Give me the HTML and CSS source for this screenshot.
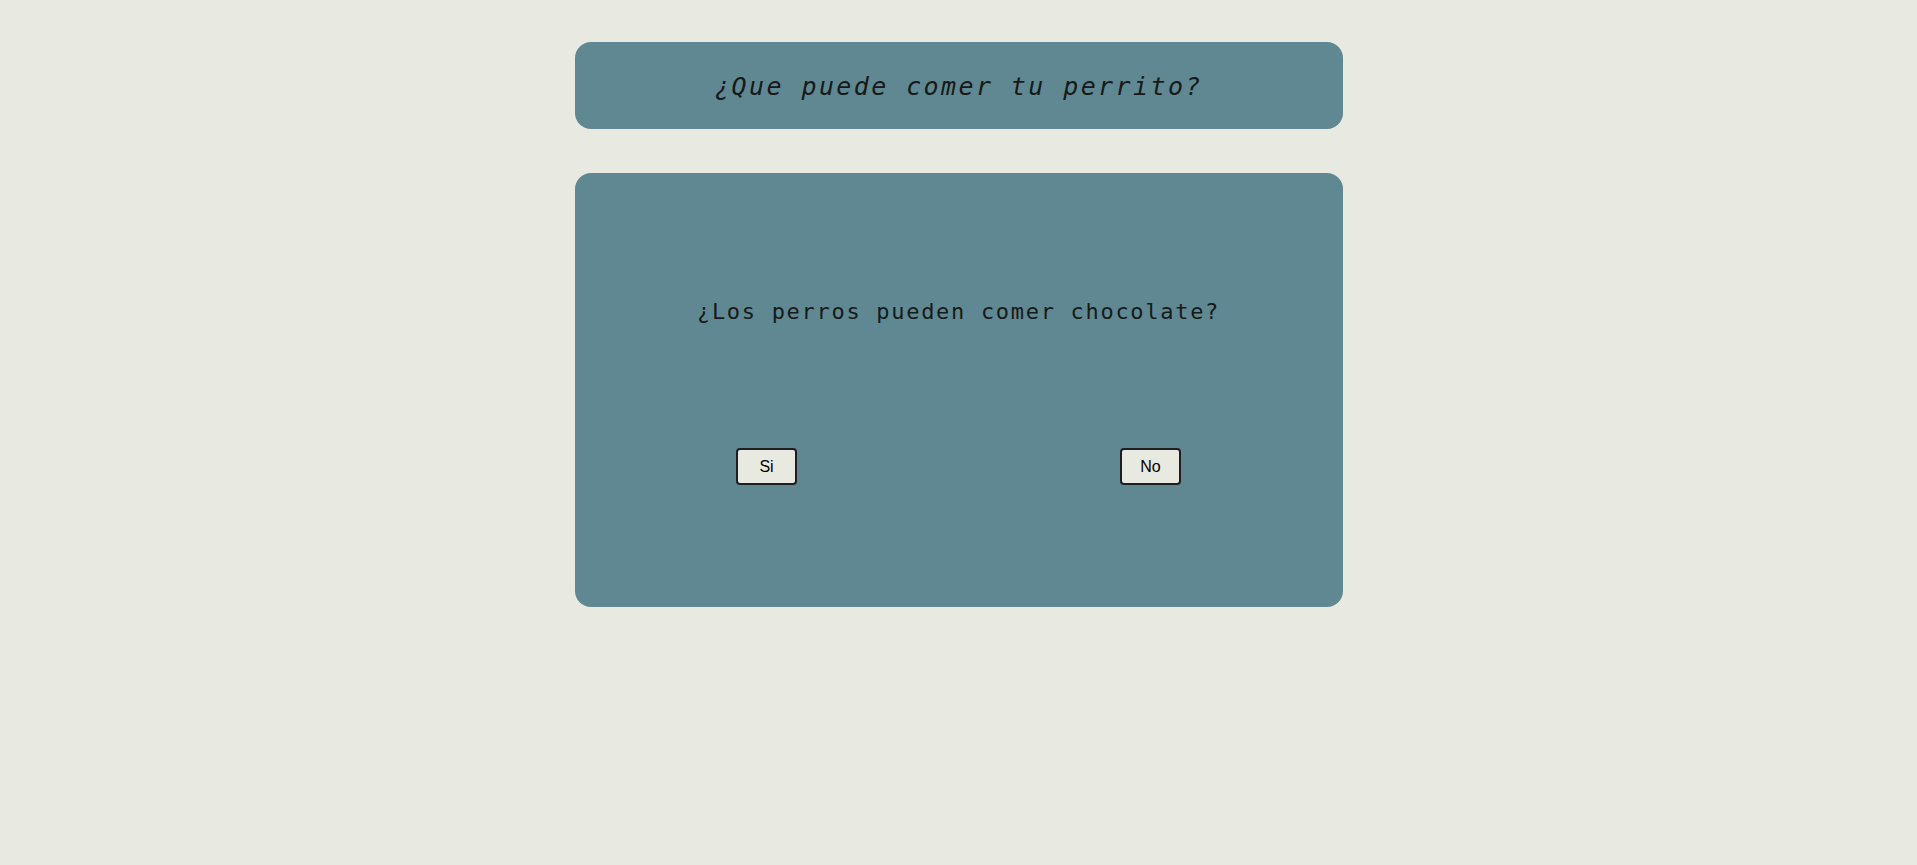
FILE: index.html
```html
<!DOCTYPE html>
<html lang="es">
<head>
<meta charset="utf-8">
<title>¿Que puede comer tu perrito?</title>
<link rel="stylesheet" href="styles.css">
</head>
<body>
<main class="page">
  <header class="title-box">
    <h1 class="title">¿Que puede comer tu perrito?</h1>
  </header>
  <section class="quiz-card">
    <p class="question">¿Los perros pueden comer chocolate?</p>
    <div class="answers">
      <button class="answer" type="button">Si</button>
      <button class="answer" type="button">No</button>
    </div>
  </section>
</main>
</body>
</html>
```
FILE: styles.css
```css
html, body {
  margin: 0;
  padding: 0;
  background: #e8e9e0;
}
body {
  font-family: "DejaVu Sans Mono", "Liberation Mono", monospace;
  color: #161a18;
}
.page {
  width: 768px;
  margin: 0 auto;
  padding-top: 42px;
  display: flex;
  flex-direction: column;
  gap: 44px;
}
.title-box {
  background: #608892;
  border-radius: 16px;
  height: 87px;
  display: flex;
  align-items: center;
  justify-content: center;
}
.title {
  margin: 0;
  font-size: 25px;
  font-style: oblique;
  font-weight: normal;
  letter-spacing: 2.4px;
  line-height: 30px;
  padding-top: 3px;
}
.quiz-card {
  background: #608892;
  border-radius: 16px;
  height: 434px;
  box-sizing: border-box;
  padding-top: 126px;
  display: flex;
  flex-direction: column;
}
.question {
  margin: 0;
  text-align: center;
  font-size: 22px;
  letter-spacing: 1.7px;
  line-height: 26px;
}
.answers {
  margin-top: 123px;
  display: flex;
  justify-content: space-around;
}
.answer {
  width: 61px;
  height: 37px;
  box-sizing: border-box;
  background: #e8e9e0;
  border: 2px solid #1e1e1e;
  border-radius: 4px;
  font-family: "Liberation Sans", Arial, sans-serif;
  font-size: 16px;
  color: #000;
  padding: 0;
}
```
